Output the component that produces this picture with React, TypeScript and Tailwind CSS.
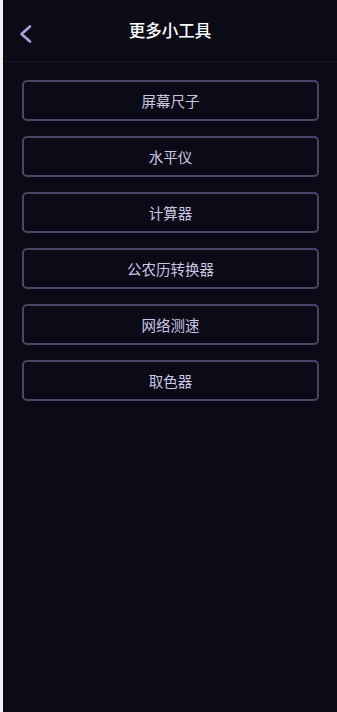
const tools = ['屏幕尺子', '水平仪', '计算器', '公农历转换器', '网络测速', '取色器'];

export default function App() {
  return (
    <div
      className="flex h-[712px] w-[337px] overflow-hidden bg-[#0b0a17]"
      style={{ fontFamily: '"Noto Sans CJK SC", "Noto Sans", sans-serif' }}
    >
      {/* sliver of the previous page */}
      <div className="w-[3px] shrink-0 bg-[#eef0f4]" />

      <div className="flex flex-1 flex-col">
        {/* Header */}
        <header className="relative flex h-[62px] items-center justify-center border-b border-[#191727]">
          <button className="absolute left-[15px] top-[24px] text-[#aaa4d6]">
            <svg width="16" height="20" viewBox="0 0 16 20" fill="none">
              <polyline
                points="12,2.5 3.5,10 12,17.5"
                stroke="currentColor"
                strokeWidth="2.6"
                strokeLinecap="round"
                strokeLinejoin="round"
              />
            </svg>
          </button>
          <h1 className="text-[16.5px] font-medium leading-none text-white">更多小工具</h1>
        </header>

        {/* Tool list */}
        <nav className="flex flex-col gap-[15px] pl-[19px] pr-[18px] pt-[18px]">
          {tools.map((name) => (
            <button
              key={name}
              className="flex h-[41px] items-center justify-center rounded-[5px] border-2 border-[#4a4566] text-[14.5px] text-[#cbc7e2]"
            >
              {name}
            </button>
          ))}
        </nav>
      </div>
    </div>
  );
}
